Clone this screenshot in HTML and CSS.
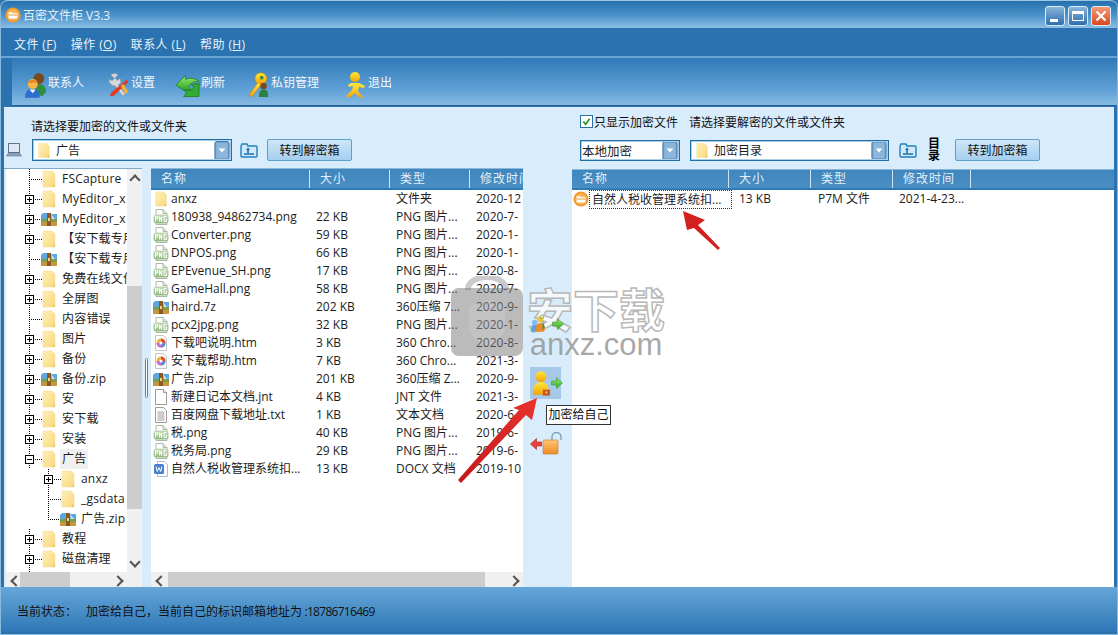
FILE: index.html
```html
<!DOCTYPE html>
<html lang="zh-CN">
<head>
<meta charset="utf-8">
<title>百密文件柜 V3.3</title>
<link rel="stylesheet" href="styles.css">
</head>
<body>
<svg class="defs" aria-hidden="true">
  <defs>
    <linearGradient id="gFolder" x1="0" y1="0" x2="1" y2="1"><stop offset="0" stop-color="#fff0b8"/><stop offset="1" stop-color="#f9d87c"/></linearGradient>
    <linearGradient id="gYellow" x1="0" y1="0" x2="0" y2="1"><stop offset="0" stop-color="#ffe93a"/><stop offset="1" stop-color="#f3a10c"/></linearGradient>
    <linearGradient id="gPng" x1="0" y1="0" x2="0" y2="1"><stop offset="0" stop-color="#c3d9b8"/><stop offset="1" stop-color="#93b983"/></linearGradient>
    <linearGradient id="gGreen" x1="0" y1="0" x2="0" y2="1"><stop offset="0" stop-color="#9be86d"/><stop offset="1" stop-color="#2ea828"/></linearGradient>
    <linearGradient id="gOrange" x1="0" y1="0" x2="0" y2="1"><stop offset="0" stop-color="#ffc67a"/><stop offset="1" stop-color="#ee8a22"/></linearGradient>
    <symbol id="i-folder" viewBox="0 0 16 18"><path d="M2 1h9l3 3v13H2z" fill="url(#gFolder)" stroke="#f3dca0" stroke-width=".6"/><path d="M11 17l3-3v3z" fill="#e9c468"/></symbol>
    <symbol id="i-zip" viewBox="0 0 16 16"><path d="M0 4l2-2h5l1 1h8v5H0z" fill="#5ba7e0"/><path d="M10 3l4 5h-3z" fill="#cfe6f8"/><path d="M0 8h16v3H0z" fill="#7aa04b"/><path d="M0 11h16v4H0z" fill="#c9953f"/><path d="M6 2h4v13H6z" fill="#8b5a24"/><path d="M7 7h2v3H7z" fill="#f3d27a"/></symbol>
    <symbol id="i-png" viewBox="0 0 16 16"><path d="M3 .5h7l4 4v11H3z" fill="#fff" stroke="#a9b9a5"/><path d="M10 .5v4h4" fill="#dfe8dc" stroke="#a9b9a5"/><rect x=".5" y="5.500" width="15" height="9" rx="3" fill="url(#gPng)"/><path d="M2.500 12.500V7.500h2v2.500h-2M6.500 12.500V7.500l2.200 5V7.500M13.500 7.500h-2.500v5h2.500V10h-1.200" fill="none" stroke="#fff" stroke-width="1"/></symbol>
    <symbol id="i-htm" viewBox="0 0 16 16"><path d="M2.500.5h8l3 3v12h-11z" fill="#fff" stroke="#c4c4c4"/><circle cx="8" cy="8" r="4.500" fill="#f4b13a"/><path d="M8 8V3.500A4.500 4.500 0 0 1 12.500 8z" fill="#e8483d"/><path d="M8 8h4.500A4.500 4.500 0 0 1 8 12.500z" fill="#4f8ae0"/><path d="M8 8v4.500A4.500 4.500 0 0 1 3.500 8z" fill="#c46fd6"/><circle cx="8" cy="8" r="1.500" fill="#fff"/></symbol>
    <symbol id="i-jnt" viewBox="0 0 16 16"><path d="M2.500.5h8l3 3v12h-11z" fill="#fff" stroke="#9a9a9a"/><path d="M10.500.5v3h3" fill="#eee" stroke="#9a9a9a"/></symbol>
    <symbol id="i-txt" viewBox="0 0 16 16"><path d="M2.500.5h8l3 3v12h-11z" fill="#fff" stroke="#9a9a9a"/><path d="M4.500 5h7M4.500 7h7M4.500 9h7M4.500 11h7M4.500 13h7" stroke="#9a9a9a"/></symbol>
    <symbol id="i-doc" viewBox="0 0 16 16"><path d="M4.500.5h7l3 3v12h-10z" fill="#fff" stroke="#a8bedd"/><rect x="1" y="3" width="10" height="10" rx="1.500" fill="#4a7fd0"/><path d="M3 5.500l1.300 5 1.700-4 1.700 4 1.300-5" fill="none" stroke="#fff"/></symbol>
    <symbol id="i-app" viewBox="0 0 18 18"><circle cx="9" cy="9" r="8.500" fill="#f09a2c"/><circle cx="9" cy="9" r="6.500" fill="#f7b458"/><path d="M4 6h4l1 1h5v6H4z" fill="#fff"/><path d="M4 8.500h10v1H4z" fill="#e98a25"/></symbol>
    <symbol id="i-up" viewBox="0 0 18 16"><path d="M1 4l1-2h5l1 2h8a1 1 0 0 1 1 1v9a1 1 0 0 1-1 1H2a1 1 0 0 1-1-1z" fill="#cfe9fb" stroke="#2080bd" stroke-width="1.400"/><path d="M4 12h10" stroke="#1a6ea8" stroke-width="1.500"/><path d="M6 8l2-2.500L10 8H8.800v3H7.200V8z" fill="#1a6ea8"/></symbol>
    <symbol id="i-drop" viewBox="0 0 16 20"><rect x=".5" y=".5" width="15" height="19" rx="2" fill="#6f9fcb" stroke="#3c78ad"/><rect x="2" y="2" width="12" height="16" rx="1" fill="#8db6db"/><path d="M4.500 8h7L8 12z" fill="#fff"/></symbol>
    <symbol id="i-person" viewBox="0 0 22 28"><circle cx="11" cy="7" r="6" fill="url(#gYellow)"/><path d="M2 27c0-9 3-14 9-14s9 5 9 14z" fill="url(#gYellow)"/></symbol>
    <symbol id="i-arrow-g" viewBox="0 0 12 12"><path d="M.5 4h5V.5L11.500 6l-6 5.500V8h-5z" fill="url(#gGreen)" stroke="#3a9a35" stroke-width=".6"/></symbol>
  </defs>
</svg>

<div class="window">
  <header class="titlebar">
    <svg class="app-icon"><use href="#i-app"/></svg>
    <span class="title">百密文件柜 V3.3</span>
    <div class="winbtns">
      <span class="winbtn"><i class="g-min"></i></span>
      <span class="winbtn"><i class="g-max"></i></span>
      <span class="winbtn close">
        <svg viewBox="0 0 12 12" class="g-x"><path d="M1.500 1.500l9 9M10.500 1.500l-9 9" stroke="#fff" stroke-width="2.200"/></svg>
      </span>
    </div>
  </header>

  <nav class="menubar">
    <span class="menu">文件 (<u>F</u>)</span>
    <span class="menu">操作 (<u>O</u>)</span>
    <span class="menu">联系人 (<u>L</u>)</span>
    <span class="menu">帮助 (<u>H</u>)</span>
  </nav>

  <div class="toolbar">
    <span class="tool t1">
      <svg class="tool-icon" viewBox="0 0 24 28"><circle cx="15" cy="7" r="6" fill="#7a4a22"/><path d="M7 24c0-8 3-11 8-11s8 3 8 9l-4 4z" fill="#2f8f3f"/><circle cx="8.500" cy="13" r="5.500" fill="#f6b545"/><path d="M3 12c1-4 9-5 11 0-3-1-7-1-11 0z" fill="#e8821f"/><path d="M0 28c0-7 3-10 8.500-10S16 21 16 28z" fill="#2c6fd0"/><path d="M5 19l3.500 4 3-4z" fill="#fff"/></svg>
      <span>联系人</span>
    </span>
    <span class="tool t2">
      <svg class="tool-icon" viewBox="0 0 24 28"><path d="M4 3c3-2 6-2 8 0l-3 3 2 3 3-2c2 3 1 6-2 7l8 10-3 2-8-11C5 15 2 12 2 8l4 1 2-2z" fill="#d5d8dc" stroke="#8b929a" stroke-width=".7"/><path d="M22 8L5 22l-2 4 4 0L23 11z" fill="#e23a22"/><path d="M15 15l5 9 3-3-5-8z" fill="#f3b13c"/></svg>
      <span>设置</span>
    </span>
    <span class="tool t3">
      <svg class="tool-icon wide" viewBox="0 0 26 26"><path d="M25 11v14H9l3-4-3-3c4 2 8 1 11-3l-3-2z" fill="#34ab33" stroke="#197c1f" stroke-width=".8"/><path d="M1 13L11 3v4c5-2 10-1 14 2-5 0-9 2-11 6l3 3H8z" fill="url(#gGreen)" stroke="#197c1f" stroke-width=".8"/></svg>
      <span>刷新</span>
    </span>
    <span class="tool t4">
      <svg class="tool-icon" viewBox="0 0 24 28"><circle cx="14" cy="7" r="6.500" fill="url(#gYellow)" stroke="#b9790e" stroke-width=".6"/><circle cx="15" cy="6" r="2" fill="#3b8f3a"/><path d="M11 11L1 25l3 2 10-13z" fill="url(#gYellow)" stroke="#b9790e" stroke-width=".6"/><circle cx="17" cy="15" r="3.500" fill="#7a4a22"/><path d="M12 27c0-6 2-8 5-8s5 2 5 8z" fill="#2f7f3f"/></svg>
      <span>私钥管理</span>
    </span>
    <span class="tool t5">
      <svg class="tool-icon" viewBox="0 0 22 28"><circle cx="10" cy="6" r="5" fill="url(#gYellow)"/><path d="M6 12h8l6 3-1 2-5-1-1 4 5 6-3 1-5-5-6 5-3-2 6-6 1-4-4 1-1-2z" fill="url(#gYellow)"/></svg>
      <span>退出</span>
    </span>
  </div>

  <main class="workspace">
    <section class="pane-left">
      <div class="head-left">
        <div class="prompt-left">请选择要加密的文件或文件夹</div>
        <div class="control-row">
          <svg class="laptop" viewBox="0 0 16 14"><rect x="2.500" y=".5" width="11" height="9" fill="#dce8f3" stroke="#5c7690"/><path d="M.5 13l2-3h11l2 3z" fill="#8fa6bc" stroke="#5c7690" stroke-width=".6"/></svg>
          <div class="combo combo-path">
            <svg class="combo-folder"><use href="#i-folder"/></svg>
            <span class="combo-text">广告</span>
            <svg class="drop"><use href="#i-drop"/></svg>
          </div>
          <svg class="up-icon"><use href="#i-up"/></svg>
          <button class="switch">转到解密箱</button>
        </div>
      </div>
      <div class="split">
        <div class="tree-box">
          <div class="tree-main">
            <div class="tree">
              <div class="node"><span class="gut"></span><svg class="ti"><use href="#i-folder"/></svg><span class="tt">FSCapture</span></div>
              <div class="node"><span class="gut"><b class="box plus"></b></span><svg class="ti"><use href="#i-folder"/></svg><span class="tt">MyEditor_x</span></div>
              <div class="node"><span class="gut"><b class="box plus"></b></span><svg class="ti"><use href="#i-zip"/></svg><span class="tt">MyEditor_x</span></div>
              <div class="node"><span class="gut"><b class="box plus"></b></span><svg class="ti"><use href="#i-folder"/></svg><span class="tt">【安下载专用</span></div>
              <div class="node"><span class="gut"></span><svg class="ti"><use href="#i-zip"/></svg><span class="tt">【安下载专用</span></div>
              <div class="node"><span class="gut"><b class="box plus"></b></span><svg class="ti"><use href="#i-folder"/></svg><span class="tt">免费在线文件</span></div>
              <div class="node"><span class="gut"><b class="box plus"></b></span><svg class="ti"><use href="#i-folder"/></svg><span class="tt">全屏图</span></div>
              <div class="node"><span class="gut"></span><svg class="ti"><use href="#i-folder"/></svg><span class="tt">内容错误</span></div>
              <div class="node"><span class="gut"><b class="box plus"></b></span><svg class="ti"><use href="#i-folder"/></svg><span class="tt">图片</span></div>
              <div class="node"><span class="gut"><b class="box plus"></b></span><svg class="ti"><use href="#i-folder"/></svg><span class="tt">备份</span></div>
              <div class="node"><span class="gut"><b class="box plus"></b></span><svg class="ti"><use href="#i-zip"/></svg><span class="tt">备份.zip</span></div>
              <div class="node"><span class="gut"><b class="box plus"></b></span><svg class="ti"><use href="#i-folder"/></svg><span class="tt">安</span></div>
              <div class="node"><span class="gut"><b class="box plus"></b></span><svg class="ti"><use href="#i-folder"/></svg><span class="tt">安下载</span></div>
              <div class="node"><span class="gut"><b class="box plus"></b></span><svg class="ti"><use href="#i-folder"/></svg><span class="tt">安装</span></div>
              <div class="node"><span class="gut"><b class="box minus"></b></span><svg class="ti"><use href="#i-folder"/></svg><span class="tt sel">广告</span></div>
              <div class="node sub"><span class="gut"><b class="box plus"></b></span><svg class="ti"><use href="#i-folder"/></svg><span class="tt">anxz</span></div>
              <div class="node sub"><span class="gut"></span><svg class="ti"><use href="#i-folder"/></svg><span class="tt">_gsdata</span></div>
              <div class="node sub last"><span class="gut"></span><svg class="ti"><use href="#i-zip"/></svg><span class="tt">广告.zip</span></div>
              <div class="node"><span class="gut"><b class="box plus"></b></span><svg class="ti"><use href="#i-folder"/></svg><span class="tt">教程</span></div>
              <div class="node"><span class="gut"><b class="box plus"></b></span><svg class="ti"><use href="#i-folder"/></svg><span class="tt">磁盘清理</span></div>
              <div class="node"><span class="gut"></span></div>
            </div>
            <div class="vscroll">
              <span class="chev-up"></span>
              <span class="vtrack"><span class="vthumb"></span></span>
              <span class="chev-down"></span>
            </div>
          </div>
          <div class="hscroll hs-tree">
            <span class="chev-left"></span><span class="hthumb t-thumb"></span><span class="chev-right"></span>
          </div>
        </div>
        <div class="splitter"><span class="grip"></span></div>
        <div class="list list-left">
          <div class="cols cols-left list-head"><span>名称</span><span>大小</span><span>类型</span><span>修改时间</span></div>
          <div class="list-body">
            <div class="cols cols-left row"><span class="nm"><svg class="fi"><use href="#i-folder"/></svg>anxz</span><span></span><span>文件夹</span><span>2020-12</span></div>
            <div class="cols cols-left row"><span class="nm"><svg class="fi"><use href="#i-png"/></svg>180938_94862734.png</span><span>22 KB</span><span>PNG 图片...</span><span>2020-7-</span></div>
            <div class="cols cols-left row"><span class="nm"><svg class="fi"><use href="#i-png"/></svg>Converter.png</span><span>59 KB</span><span>PNG 图片...</span><span>2020-1-</span></div>
            <div class="cols cols-left row"><span class="nm"><svg class="fi"><use href="#i-png"/></svg>DNPOS.png</span><span>66 KB</span><span>PNG 图片...</span><span>2020-1-</span></div>
            <div class="cols cols-left row"><span class="nm"><svg class="fi"><use href="#i-png"/></svg>EPEvenue_SH.png</span><span>17 KB</span><span>PNG 图片...</span><span>2020-8-</span></div>
            <div class="cols cols-left row"><span class="nm"><svg class="fi"><use href="#i-png"/></svg>GameHall.png</span><span>58 KB</span><span>PNG 图片...</span><span>2020-7-</span></div>
            <div class="cols cols-left row"><span class="nm"><svg class="fi"><use href="#i-zip"/></svg>haird.7z</span><span>202 KB</span><span>360压缩 7...</span><span>2020-9-</span></div>
            <div class="cols cols-left row"><span class="nm"><svg class="fi"><use href="#i-png"/></svg>pcx2jpg.png</span><span>32 KB</span><span>PNG 图片...</span><span>2020-1-</span></div>
            <div class="cols cols-left row"><span class="nm"><svg class="fi"><use href="#i-htm"/></svg>下载吧说明.htm</span><span>3 KB</span><span>360 Chro...</span><span>2020-8-</span></div>
            <div class="cols cols-left row"><span class="nm"><svg class="fi"><use href="#i-htm"/></svg>安下载帮助.htm</span><span>7 KB</span><span>360 Chro...</span><span>2021-3-</span></div>
            <div class="cols cols-left row"><span class="nm"><svg class="fi"><use href="#i-zip"/></svg>广告.zip</span><span>201 KB</span><span>360压缩 Z...</span><span>2020-9-</span></div>
            <div class="cols cols-left row"><span class="nm"><svg class="fi"><use href="#i-jnt"/></svg>新建日记本文档.jnt</span><span>4 KB</span><span>JNT 文件</span><span>2021-3-</span></div>
            <div class="cols cols-left row"><span class="nm"><svg class="fi"><use href="#i-txt"/></svg>百度网盘下载地址.txt</span><span>1 KB</span><span>文本文档</span><span>2020-6-</span></div>
            <div class="cols cols-left row"><span class="nm"><svg class="fi"><use href="#i-png"/></svg>税.png</span><span>40 KB</span><span>PNG 图片...</span><span>2019-6-</span></div>
            <div class="cols cols-left row"><span class="nm"><svg class="fi"><use href="#i-png"/></svg>税务局.png</span><span>29 KB</span><span>PNG 图片...</span><span>2019-6-</span></div>
            <div class="cols cols-left row"><span class="nm"><svg class="fi"><use href="#i-doc"/></svg>自然人税收管理系统扣...</span><span>13 KB</span><span>DOCX 文档</span><span>2019-10</span></div>
          </div>
          <div class="hscroll hs-list">
            <span class="chev-left"></span><span class="hthumb l-thumb"></span><span class="chev-right"></span>
          </div>
        </div>
      </div>
    </section>

    <aside class="gutter">
      <span class="gbtn g1">
        <svg class="g-ic" viewBox="0 0 28 24"><path d="M1 22c0-6 2-9 5-9s5 3 5 9z" fill="#5aa2e8"/><circle cx="6" cy="10" r="3.500" fill="#7cbcf0"/><circle cx="13" cy="6" r="4" fill="#f2c53c"/><path d="M7 22c0-8 2-11 6-11s6 3 6 9l-2 2z" fill="#ec8b28"/><circle cx="15" cy="3" r="2.500" fill="none" stroke="#79b36a"/><path d="M16 8l3 8-3 4z" fill="#3f9a3c"/></svg>
        <svg class="g-arrow"><use href="#i-arrow-g"/></svg>
      </span>
      <span class="gbtn g2">
        <svg class="g-person"><use href="#i-person"/></svg>
        <svg class="g-lock" viewBox="0 0 10 10"><rect x="1" y="3" width="8" height="6.500" fill="#c6561c"/><rect x="4" y="5" width="2" height="2" fill="#ffd36b"/></svg>
        <svg class="g-arrow"><use href="#i-arrow-g"/></svg>
      </span>
      <span class="gbtn g3">
        <svg class="g-arrow-red" viewBox="0 0 12 12"><path d="M11.500 4h-5V.5L.5 6l6 5.500V8h5z" fill="#e8433a" stroke="#a9201c" stroke-width=".6"/></svg>
        <svg class="g-open" viewBox="0 0 20 24"><path d="M10 9V5a4.500 4.500 0 0 1 9 0v3" fill="none" stroke="#7ba0b8" stroke-width="1.400"/><rect x="1" y="8" width="15" height="14" rx="1" fill="url(#gOrange)" stroke="#c27a2a" stroke-width=".6"/></svg>
      </span>
    </aside>

    <section class="pane-right">
      <div class="head-right">
        <div class="check-row">
          <label class="check"><span class="checkbox"><svg viewBox="0 0 12 12"><path d="M2.500 6l2.500 3 4.500-6" fill="none" stroke="#2f9a35" stroke-width="2"/></svg></span>只显示加密文件</label>
          <span class="prompt-right">请选择要解密的文件或文件夹</span>
        </div>
        <div class="control-row right-controls">
          <div class="combo combo-kind"><span class="combo-plain">本地加密</span><svg class="drop"><use href="#i-drop"/></svg></div>
          <div class="combo combo-dir"><svg class="combo-folder"><use href="#i-folder"/></svg><span class="combo-text">加密目录</span><svg class="drop"><use href="#i-drop"/></svg></div>
          <svg class="up-icon up-r"><use href="#i-up"/></svg>
          <span class="dir-tag">目录</span>
          <button class="switch sw-r">转到加密箱</button>
        </div>
      </div>
      <div class="list list-right">
        <div class="cols cols-right list-head"><span>名称</span><span>大小</span><span>类型</span><span>修改时间</span><span></span></div>
        <div class="list-body">
          <div class="cols cols-right row row-r"><span class="nm"><svg class="fi fi-app"><use href="#i-app"/></svg><em class="focus">自然人税收管理系统扣...</em></span><span>13 KB</span><span>P7M 文件</span><span>2021-4-23...</span><span></span></div>
        </div>
      </div>
    </section>
  </main>

  <footer class="statusbar">
    <span class="st-label">当前状态：</span>
    <span>加密给自己，当前自己的标识邮箱地址为<span class="st-num"> :18786716469</span></span>
  </footer>
</div>

<div class="watermark" aria-hidden="true">
  <svg class="wm-lock" viewBox="0 0 72 80"><path d="M17 14V13a19 12 0 0 1 38 0v1" fill="none" stroke="#8c8c8c" stroke-opacity=".45" stroke-width="6"/><path d="M8 12h56a8 8 0 0 1 8 8v52a8 8 0 0 1-8 8H8a8 8 0 0 1-8-8V20a8 8 0 0 1 8-8z" fill="#7d7d7d" fill-opacity=".52"/><path d="M36 24l-18 6v20c0 10 9 16 18 20 9-4 18-10 18-20V30z" fill="#fff" fill-opacity=".1"/></svg>
  <div class="wm-text"><span class="wm-cn">安下载</span><span class="wm-en">anxz.com</span></div>
</div>
<svg class="red-arrow a1" viewBox="0 0 90 96"><defs><linearGradient id="gr1" x1="0" y1="1" x2="1" y2="0"><stop offset="0" stop-color="#c2191c"/><stop offset="1" stop-color="#e8322c"/></linearGradient></defs><path d="M2 92L63 22l-6-2 24-10-5 22-6-5L5 95z" fill="url(#gr1)"/></svg>
<svg class="red-arrow a2" viewBox="0 0 44 44"><path d="M3 2l22 9-7 5 22 23-2 2-24-22-7 2z" fill="#d3201f"/></svg>
<div class="tooltip">加密给自己</div>
</body>
</html>
```

FILE: styles.css
```css
* { box-sizing: border-box; }
html, body { margin: 0; padding: 0; height: 100%; overflow: hidden; }
body {
  font-family: "Open Sans", "Noto Sans CJK SC", "Liberation Sans", sans-serif;
  font-size: 12px;
  color: #1c1c1c;
  background: #2a72b0;
}
.defs { position: absolute; width: 0; height: 0; }
svg { display: block; flex: none; }

.window {
  width: 1118px;
  height: 635px;
  display: flex;
  flex-direction: column;
  background: #2a72b0;
  border-radius: 7px 7px 0 0;
  padding: 0 3px 2px;
  border-left: 1px solid #8bb9dc;
  border-right: 1px solid #8bb9dc;
  border-bottom: 1px solid #8bb9dc;
}
.titlebar {
  height: 28px;
  margin: 0 -3px;
  padding: 0 6px 0 4px;
  display: flex;
  align-items: center;
  border-radius: 7px 7px 0 0;
  border-top: 1px solid #9cc6e4;
  background: linear-gradient(#2470ad 0, #4d94cb 55%, #8bbfe5 100%);
}
.app-icon { width: 16px; height: 16px; }
.title { margin-left: 2px; font-size: 12px; color: #e6f2fb; }
.winbtns { margin-left: auto; display: flex; gap: 3px; margin-top: 2px; }
.winbtn {
  width: 20px; height: 20px;
  border: 1px solid #d8ebf8;
  border-radius: 3px;
  background: linear-gradient(#8ab4da, #2e6eb0);
  display: flex; align-items: center; justify-content: center;
  position: relative;
}
.winbtn.close { background: linear-gradient(#f29a78, #d9481f); }
.g-min { width: 8px; height: 3px; background: #fff; margin-top: 9px; margin-left: -2px; }
.g-max { width: 12px; height: 10px; border: 1px solid #fff; border-top-width: 3px; }
.g-x { width: 12px; height: 12px; }

.menubar {
  height: 30px;
  margin: 0 -3px;
  padding: 3px 0 0 13px;
  display: flex;
  align-items: center;
  gap: 14px;
  background: #2a72b0;
  color: #e8f3fb;
  border-bottom: 2px solid #6ba5d3;
}
.menu { white-space: nowrap; letter-spacing: .4px; }

.toolbar {
  height: 48px;
  margin-left: 8px;
  margin-right: -3px;
  padding-top: 1px;
  display: flex;
  align-items: center;
  background: linear-gradient(#2f79b7, #5d9fd5 65%, #86bae2);
  border-bottom: 1px solid #245f92;
  color: #f1f8fd;
  position: relative;
}
.tool { display: flex; align-items: center; white-space: nowrap; }
.tool-icon { width: 22px; height: 28px; margin-top: 6px; }
.tool-icon.wide { width: 25px; height: 26px; }
.t1 { margin-left: 13px; gap: 1px; }
.t2 { margin-left: 23px; gap: 2px; }
.t3 { margin-left: 20px; gap: 1px; }
.t4 { margin-left: 23px; gap: 1px; }
.t5 { margin-left: 26px; gap: 1px; }

.workspace {
  flex: 1;
  min-height: 0;
  display: grid;
  grid-template-columns: 519px 49px 1fr;
  background: #d9ecfb;
  border-top: 1px solid #e6f2fb;
  margin-top: 1px;
}
.pane-left, .pane-right { display: flex; flex-direction: column; min-width: 0; min-height: 0; }

.head-left { height: 60px; padding-top: 10px; flex: none; }
.prompt-left { margin-left: 27px; height: 17px; line-height: 17px; color: #111; }
.control-row { display: flex; align-items: center; margin-top: 4px; }
.laptop { width: 16px; height: 14px; margin-left: 2px; margin-right: 10px; }
.combo {
  height: 22px;
  background: #fff;
  border: 1px solid #1f6ea6;
  outline: 1px solid #a9cfe9;
  outline-offset: -2px;
  display: flex;
  align-items: center;
  padding: 0 1px 0 4px;
}
.combo-path { width: 200px; }
.combo-folder { width: 14px; height: 17px; }
.combo-text { margin-left: 5px; }
.drop { width: 16px; height: 19px; margin-left: auto; }
.up-icon { width: 18px; height: 16px; margin-left: 8px; }
.switch {
  width: 85px;
  height: 22px;
  margin-left: 9px;
  padding: 0;
  font: inherit;
  color: #111;
  border: 1px solid #5d9fce;
  border-radius: 2px;
  background: linear-gradient(#cfe6f8, #a4cff0);
}

.split { flex: 1; min-height: 0; display: flex; }
.tree-box {
  width: 138px;
  padding-left: 2px;
  display: flex;
  flex-direction: column;
  border-top: 1px solid #7fa9c9;
  flex: none;
  min-height: 0;
}
.tree-main { flex: 1; min-height: 0; display: flex; }
.tree { width: 121px; background: #fff; overflow: hidden; flex: none; }
.node { height: 20px; display: flex; align-items: center; white-space: nowrap; padding-left: 19px; }
.node.sub { padding-left: 38px; }
.gut {
  width: 17px;
  height: 20px;
  flex: none;
  display: flex;
  align-items: center;
  background:
    repeating-linear-gradient(#000 0 1px, transparent 1px 2px) 4px 0 / 1px 100% no-repeat,
    repeating-linear-gradient(90deg, #000 0 1px, transparent 1px 2px) 4px 50% / 100% 1px no-repeat;
}
.node.last .gut {
  background:
    repeating-linear-gradient(#000 0 1px, transparent 1px 2px) 4px 0 / 1px 50% no-repeat,
    repeating-linear-gradient(90deg, #000 0 1px, transparent 1px 2px) 4px 50% / 100% 1px no-repeat;
}
.box {
  width: 9px; height: 9px;
  border: 1px solid #000;
  background: #fff;
  position: relative;
  display: block;
}
.box::before { content: ""; position: absolute; left: 1px; top: 3px; width: 5px; height: 1px; background: #000; }
.box.plus::after { content: ""; position: absolute; left: 3px; top: 1px; width: 1px; height: 5px; background: #000; }
.ti { width: 16px; height: 18px; margin-left: -1px; }
.tt { margin-left: 5px; line-height: 20px; letter-spacing: .2px; }
.tt.sel { background: #f0f0f0; padding: 0 2px; margin-left: 3px; }

.vscroll { width: 15px; background: #f0f0f0; display: flex; flex-direction: column; flex: none; }
.vtrack { flex: 1; display: block; padding-top: 100px; padding-bottom: 46px; }
.vthumb { display: block; height: 100%; background: #cdcdcd; }
.chev-up, .chev-down, .chev-left, .chev-right { flex: none; display: block; width: 15px; height: 17px; position: relative; }
.chev-up::before, .chev-down::before, .chev-left::before, .chev-right::before {
  content: ""; position: absolute; left: 4px; top: 6px; width: 6px; height: 6px;
  border-left: 2px solid #555; border-top: 2px solid #555;
}
.chev-up::before { transform: rotate(45deg); top: 7px; }
.chev-down::before { transform: rotate(225deg); top: 3px; }
.chev-left::before { transform: rotate(-45deg); top: 5px; left: 6px; }
.chev-right::before { transform: rotate(135deg); top: 5px; left: 2px; }

.hscroll { height: 15px; background: #f0f0f0; display: flex; flex: none; align-items: stretch; }
.hs-tree { width: 136px; padding-right: 15px; }
.hthumb { display: block; background: #cdcdcd; }
.t-thumb { width: 50px; margin-left: -1px; }
.l-thumb { width: 317px; margin-left: 2px; }
.hs-tree .chev-right { margin-left: auto; }
.hs-list .chev-right { margin-left: auto; }

.splitter { width: 9px; flex: none; padding-top: 190px; display: flex; justify-content: center; }
.grip { width: 3px; height: 40px; border: 1px solid #4b86b8; border-radius: 2px; background: #fff; }

.list { background: #fff; display: flex; flex-direction: column; min-height: 0; min-width: 0; overflow: hidden; flex: 1; }
.cols { display: grid; }
.cols-left { grid-template-columns: 159px 80px 80px 1fr; }
.cols-right { grid-template-columns: 157px 82px 82px 78px 1fr; }
.list-head {
  height: 21px;
  flex: none;
  align-items: center;
  color: #e3eff8;
  background: linear-gradient(#3f86bd, #4a8fc4);
  border-bottom: 2px solid #2f7cb5;
  border-top: 1px solid #8ab7da;
}
.list-left .list-head { height: 22px; }
.list-head > span { padding-left: 10px; height: 18px; line-height: 18px; border-right: 1px solid #cfe3f2; white-space: nowrap; letter-spacing: 1px; overflow: hidden; }
.list-left .list-head > span:last-child { border-right: 0; }
.list-right .list-head > span:last-child { border-right: 0; }
.list-body { flex: 1; min-height: 0; }
.row { height: 18px; line-height: 18px; white-space: nowrap; }
.row > span { padding-left: 6px; overflow: hidden; }
.row > .nm { padding-left: 2px; display: flex; align-items: center; gap: 2px; overflow: visible; }
.fi { width: 16px; height: 16px; }
.row-r.cols-right { grid-template-columns: 161px 79px 81px 1fr 0; }
.row-r > .nm { padding-left: 1px; gap: 1px; }
.focus { font-style: normal; outline: 1px dotted #333; padding: 0 1px 0 2px; line-height: 17px; width: 141px; }

.gutter { background: #d9ecfb; display: flex; flex-direction: column; align-items: flex-start; padding: 204px 0 0 7px; min-height: 0; }
.gbtn { display: flex; align-items: center; width: 31px; position: relative; z-index: 2; }
.g1 { height: 24px; }
.g-ic { width: 22px; height: 22px; }
.g-arrow { width: 12px; height: 12px; }
.g2 { height: 32px; margin-top: 31px; background: #a8c8e8; padding-left: 1px; }
.g-person { width: 20px; height: 28px; }
.g-lock { position: absolute; left: 12px; bottom: 3px; width: 9px; height: 9px; }
.g3 { height: 24px; margin-top: 33px; }
.g-arrow-red { width: 12px; height: 12px; }
.g-open { width: 20px; height: 24px; }

.head-right { height: 61px; padding-top: 5px; flex: none; }
.check-row { display: flex; align-items: center; height: 17px; padding-left: 8px; }
.check { display: flex; align-items: center; gap: 1px; color: #111; }
.checkbox { width: 13px; height: 13px; border: 1px solid #2b6fa3; background: #fff; display: block; }
.prompt-right { margin-left: 11px; color: #111; }
.right-controls { margin-top: 8px; padding-left: 8px; }
.combo-kind { width: 100px; height: 21px; padding-left: 1px; }
.combo-plain { font-size: 12.500px; }
.combo-dir { width: 199px; height: 21px; margin-left: 10px; }
.up-r { margin-left: 10px; }
.dir-tag { width: 12px; margin-left: 11px; font-size: 12px; line-height: 12px; font-weight: 700; color: #000; text-align: center; }
.sw-r { margin-left: 15px; }

.statusbar {
  height: 45px;
  flex: none;
  margin: 0 -3px;
  padding: 2px 0 0 16px;
  display: flex;
  align-items: center;
  gap: 9px;
  color: #111;
  background: linear-gradient(#66a6d9, #2e78b6);
}
.st-num { letter-spacing: -.7px; }

.watermark { position: absolute; z-index: 1; left: 451px; top: 276px; display: flex; gap: 4px; pointer-events: none; }
.wm-lock { width: 72px; height: 80px; }
.wm-text { display: flex; flex-direction: column; align-items: center; margin-top: 10px; }
.wm-cn { font-size: 46px; line-height: 46px; font-weight: 700; color: rgba(255,255,255,.7); -webkit-text-stroke: 1.500px #b8b8b8; }
.wm-en { font-size: 31px; line-height: 26px; color: rgba(140,140,140,.75); font-family: "Liberation Sans", sans-serif; }

.red-arrow { position: absolute; z-index: 3; pointer-events: none; }
.a1 { left: 456px; top: 388px; width: 90px; height: 96px; }
.a2 { left: 680px; top: 209px; width: 44px; height: 44px; }
.tooltip {
  position: absolute;
  z-index: 3;
  left: 546px; top: 405px;
  width: 65px; height: 20px;
  line-height: 18px;
  text-align: center;
  background: #fff;
  border: 1px solid #333;
  white-space: nowrap;
  color: #111;
}
```
